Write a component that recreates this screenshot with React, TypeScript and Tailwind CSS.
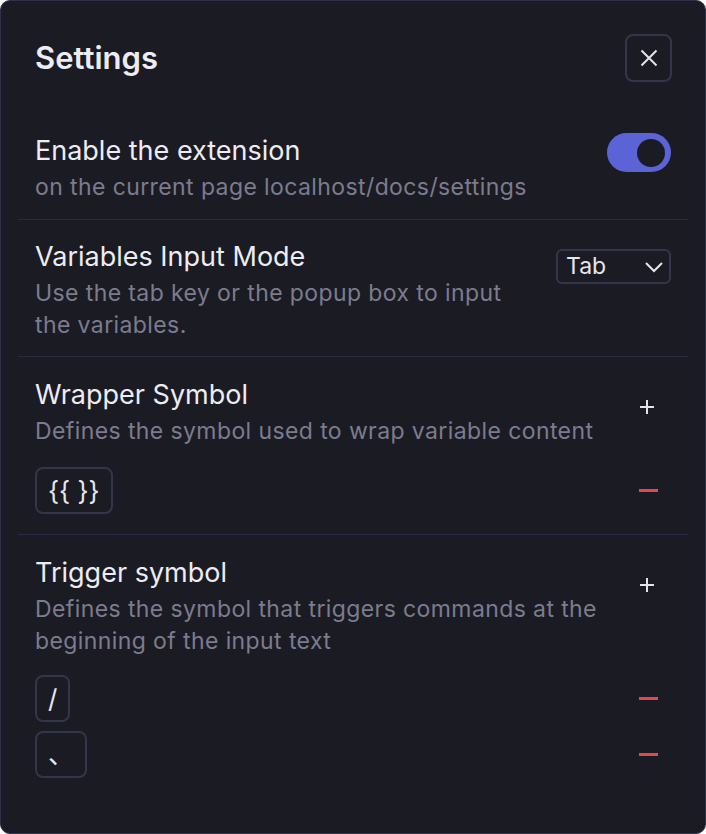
import React, { useState } from 'react';

const font = { fontFamily: 'Inter, "Noto Sans CJK SC", sans-serif' };

const Plus = () => (
  <svg width="16" height="16" viewBox="0 0 16 16" fill="none" stroke="currentColor" strokeWidth="2" strokeLinecap="butt">
    <path d="M8 1v14M1 8h14" />
  </svg>
);

const Minus = () => <div className="w-[19px] h-[3px] bg-[#e5484d]" />;

const Chip = ({ text }: { text: string }) => (
  <div className="h-[47px] px-[11px] flex items-center border-2 border-[#33354b] rounded-lg text-[26px] text-[#e6e6ee]">
    {text}
  </div>
);

const Section = ({
  title,
  desc,
  right,
  className,
  children,
}: {
  title: string;
  desc: React.ReactNode;
  right: React.ReactNode;
  className: string;
  children?: React.ReactNode;
}) => (
  <div className={`px-[17px] ${className}`}>
    <div className="flex items-start justify-between gap-4">
      <div className="flex-1 whitespace-nowrap">
        <div className="text-[27px] leading-10 text-[#ececf2]">{title}</div>
        <div className="text-[23px] leading-8 tracking-[0.4px] text-[#7c7c8f]">{desc}</div>
      </div>
      {right}
    </div>
    {children}
  </div>
);

const SymbolList = ({ items, className }: { items: string[]; className: string }) => (
  <div className={`flex flex-col gap-[9px] ${className}`}>
    {items.map((w) => (
      <div key={w} className="flex items-center justify-between h-[47px]">
        <Chip text={w} />
        <button className="-mr-[1px] w-12 h-[47px] flex items-center justify-center">
          <Minus />
        </button>
      </div>
    ))}
  </div>
);

export default function App() {
  const [on, setOn] = useState(true);

  return (
    <div style={font} className="w-[706px] h-[834px] bg-[#1b1b23] border border-[#2f3148] rounded-[10px] flex flex-col">
      {/* header */}
      <div className="flex items-center justify-between pl-[34px] pr-[33px] pt-[33px]">
        <h1 className="text-[31px] font-semibold text-[#ececf3]">Settings</h1>
        <button className="w-[47px] h-[48px] rounded-lg border-2 border-[#33354b] flex items-center justify-center text-[#e3e3ee]">
          <svg width="18" height="18" viewBox="0 0 18 18" fill="none" stroke="currentColor" strokeWidth="2">
            <path d="M1.5 1.5l15 15M16.5 1.5l-15 15" />
          </svg>
        </button>
      </div>

      <div className="px-[17px] pt-[33px] flex flex-col">
        <Section
          title="Enable the extension"
          desc="on the current page localhost/docs/settings"
          className="pt-4 pb-4"
          right={
            <button
              onClick={() => setOn(!on)}
              className="mt-[2px] w-[64px] h-[39px] rounded-full bg-[#5b63d7] flex items-center justify-end px-[6px] shrink-0"
            >
              <span className="w-[28px] h-[28px] rounded-full bg-[#1b1b23]" />
            </button>
          }
        />
        <div className="h-px bg-[#2a2b3e]" />
        <Section
          title="Variables Input Mode"
          desc={
            <>
              Use the tab key or the popup box to input
              <br />
              the variables.
            </>
          }
          className="pt-[17px] pb-[15px]"
          right={
            <div className="mt-3 w-[115px] h-[35px] rounded-md border-2 border-[#33354b] flex items-center justify-between pl-2 pr-[5px] shrink-0">
              <span className="text-[23px] text-[#e6e6ee]">Tab</span>
              <svg width="20" height="12" viewBox="0 0 20 12" fill="none" stroke="#e6e6ee" strokeWidth="2">
                <path d="M2 2l8 8 8-8" />
              </svg>
            </div>
          }
        />
        <div className="h-px bg-[#2a2b3e]" />
        <Section
          title="Wrapper Symbol"
          desc="Defines the symbol used to wrap variable content"
          className="pt-[18px] pb-5"
          right={
            <button className="mt-2 w-12 h-12 flex items-center justify-center text-[#e3e3ee] shrink-0">
              <Plus />
            </button>
          }
        >
          <SymbolList items={['{{ }}']} className="mt-5" />
        </Section>
        <div className="h-px bg-[#2a2b3e]" />
        <Section
          title="Trigger symbol"
          desc={
            <>
              Defines the symbol that triggers commands at the
              <br />
              beginning of the input text
            </>
          }
          className="pt-[18px] pb-5"
          right={
            <button className="mt-2 w-12 h-12 flex items-center justify-center text-[#e3e3ee] shrink-0">
              <Plus />
            </button>
          }
        >
          <SymbolList items={['/', '、']} className="mt-[18px]" />
        </Section>
      </div>
    </div>
  );
}
